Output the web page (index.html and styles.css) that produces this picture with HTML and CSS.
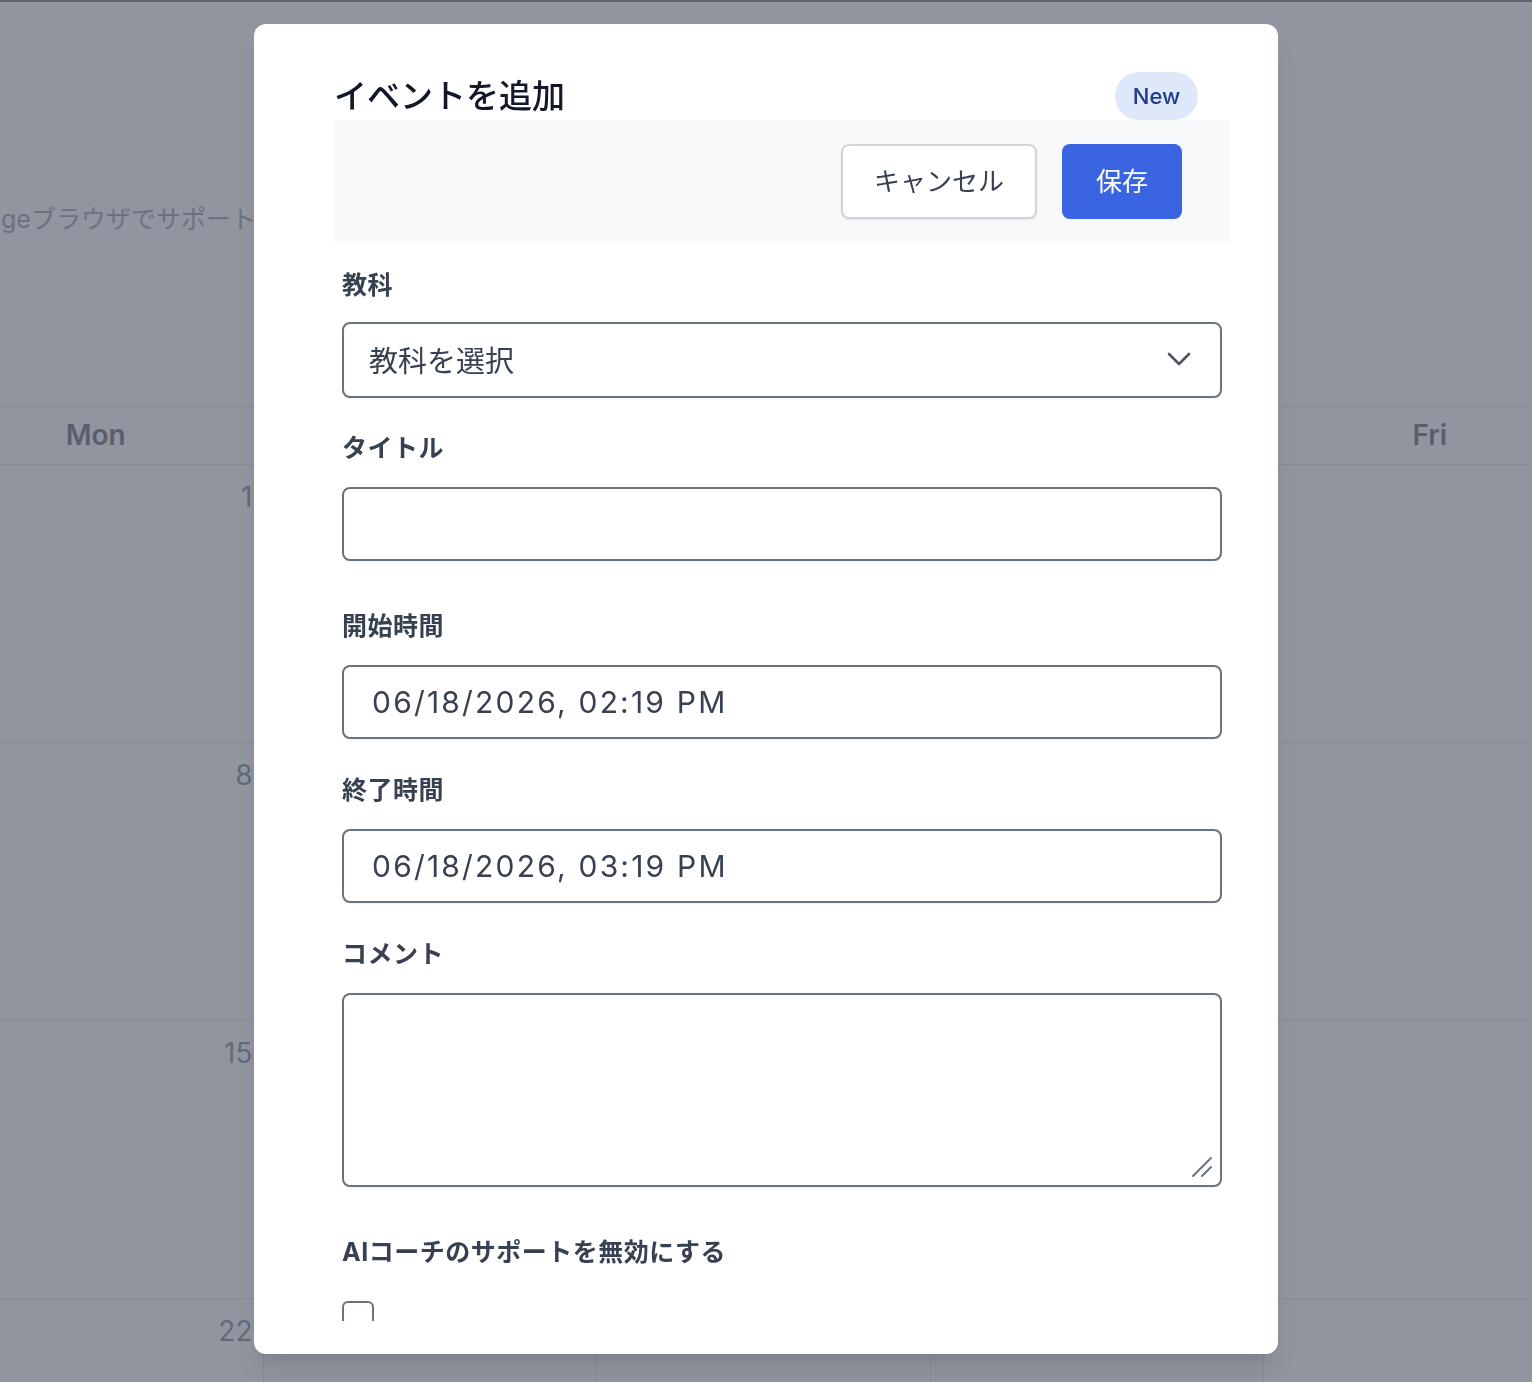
FILE: index.html
```html
<!DOCTYPE html>
<html lang="ja">
<head>
    <meta charset="UTF-8">
    <meta name="viewport" content="width=device-width, initial-scale=1.0">
    <title>カレンダー</title>
    <link rel="stylesheet" href="styles.css">
</head>
<body>

    <div class="page">
        <p class="notice">geブラウザでサポートされています</p>

        <div class="calendar">
            <div class="cal-head">
                <div>Mon</div>
                <div>Tue</div>
                <div>Wed</div>
                <div>Thu</div>
                <div>Fri</div>
            </div>
            <div class="cal-row">
                <div class="cell"><span>1</span></div>
                <div class="cell"><span>2</span></div>
                <div class="cell"><span>3</span></div>
                <div class="cell"><span>4</span></div>
                <div class="cell"><span>5</span></div>
            </div>
            <div class="cal-row">
                <div class="cell"><span>8</span></div>
                <div class="cell"><span>9</span></div>
                <div class="cell"><span>10</span></div>
                <div class="cell"><span>11</span></div>
                <div class="cell"><span>12</span></div>
            </div>
            <div class="cal-row">
                <div class="cell"><span>15</span></div>
                <div class="cell"><span>16</span></div>
                <div class="cell"><span>17</span></div>
                <div class="cell"><span>18</span></div>
                <div class="cell"><span>19</span></div>
            </div>
            <div class="cal-row">
                <div class="cell"><span>22</span></div>
                <div class="cell"><span>23</span></div>
                <div class="cell"><span>24</span></div>
                <div class="cell"><span>25</span></div>
                <div class="cell"><span>26</span></div>
            </div>
        </div>
    </div>

    <div class="overlay">
        <div class="modal">
            <div class="modal-inner">
                <div class="modal-head">
                    <h2>イベントを追加</h2>
                    <span class="badge">New</span>
                </div>

                <div class="actions">
                    <button type="button" class="btn btn-cancel">キャンセル</button>
                    <button type="submit" class="btn btn-save">保存</button>
                </div>

                <form class="event-form">
                    <div class="field field-select">
                        <label>教科</label>
                        <div class="select">
                            <span>教科を選択</span>
                            <svg width="26" height="16" viewBox="0 0 26 16" fill="none">
                                <path d="M3 3l10 10 10-10" stroke="#4b5563" stroke-width="2.6" stroke-linecap="round" stroke-linejoin="round"/>
                            </svg>
                        </div>
                    </div>

                    <div class="field field-wide">
                        <label>タイトル</label>
                        <input type="text" class="input">
                    </div>

                    <div class="field">
                        <label>開始時間</label>
                        <input type="text" class="input input-date" value="06/18/2026, 02:19 PM">
                    </div>

                    <div class="field">
                        <label>終了時間</label>
                        <input type="text" class="input input-date" value="06/18/2026, 03:19 PM">
                    </div>

                    <div class="field field-wide">
                        <label>コメント</label>
                        <div class="textarea-wrap">
                            <textarea class="input textarea"></textarea>
                            <svg class="resizer" width="22" height="22" viewBox="0 0 22 22" fill="none">
                                <path d="M2 20L20 2M11 20L20 11" stroke="#6b7280" stroke-width="2" stroke-linecap="round"/>
                            </svg>
                        </div>
                    </div>

                    <div class="field">
                        <label class="label-check">AIコーチのサポートを無効にする</label>
                        <input type="checkbox" class="check">
                    </div>
                </form>
            </div>
        </div>
    </div>

</body>
</html>
```

FILE: styles.css
```css
html, body {
    margin: 0;
    height: 100%;
    overflow: hidden;
}

body {
    font-family: Inter, "Noto Sans CJK JP", sans-serif;
    background: #fff;
    border-top: 2px solid #3a3b3d;
    box-sizing: border-box;
}

.page {
    margin-left: -71px;
}

.notice {
    margin: 201px 0 0 72px;
    font-size: 25px;
    line-height: 32px;
    color: #6b7280;
    white-space: nowrap;
}

.calendar {
    margin-top: 171px;
    width: 1668px;
}

.cal-head {
    display: grid;
    grid-template-columns: repeat(5, 333.5px);
    border-top: 1px solid #d1d5db;
    border-bottom: 1px solid #d1d5db;
}

.cal-head div {
    height: 57px;
    line-height: 57px;
    text-align: center;
    font-size: 28px;
    font-weight: 600;
    color: #1f2937;
}

.cal-row {
    display: grid;
    grid-template-columns: repeat(5, 333.5px);
    border-bottom: 1px solid #d1d5db;
}

.cell {
    height: 277px;
    padding: 16px 10px 0 0;
    box-sizing: border-box;
    text-align: right;
    border-left: 1px solid #d1d5db;
    font-size: 28px;
    line-height: 32px;
    color: #4b5563;
}

.cell:first-child {
    border-left: none;
}

/* modal */

.overlay {
    position: fixed;
    inset: 0;
    background: rgba(107, 114, 128, 0.75);
    display: flex;
    justify-content: center;
    align-items: flex-start;
    padding-top: 24px;
}

.modal {
    width: 1024px;
    height: 1330px;
    box-sizing: border-box;
    background: #fff;
    border-radius: 12px;
    padding: 48px 48px 33px 80px;
    box-shadow: 0 20px 25px -5px rgba(0, 0, 0, 0.1), 0 10px 10px -5px rgba(0, 0, 0, 0.04);
    display: flex;
    flex-direction: column;
}

.modal-inner {
    flex: 1;
    overflow: hidden;
}

.modal-head {
    display: flex;
    justify-content: space-between;
    align-items: center;
    height: 48px;
    padding-right: 32px;
}

.modal-head h2 {
    margin: 0;
    font-size: 33px;
    font-weight: 500;
    color: #111827;
    line-height: 48px;
}

.badge {
    display: inline-flex;
    align-items: center;
    justify-content: center;
    width: 83px;
    height: 48px;
    border-radius: 24px;
    background: #dfe8fb;
    color: #1e3a8a;
    font-size: 22px;
    font-weight: 500;
}

.actions {
    display: flex;
    justify-content: flex-end;
    gap: 25px;
    padding: 24px 48px 24px 0;
    background: #f8f9fb;
}

.btn {
    height: 75px;
    padding: 0 0 5px;
    border-radius: 8px;
    font-family: inherit;
    font-size: 26px;
    cursor: pointer;
}

.btn-cancel {
    width: 196px;
    background: #fff;
    color: #374151;
    border: 2px solid #d1d5db;
    box-shadow: 0 1px 2px rgba(0, 0, 0, 0.08);
}

.btn-save {
    width: 120px;
    background: #3a64e2;
    color: #fff;
    border: none;
}

.event-form {
    padding: 26px 8px 0;
}

.field {
    margin-bottom: 35px;
}

.field-select {
    margin-bottom: 34px;
}

.field-wide {
    margin-bottom: 49px;
}

.field label {
    display: block;
    font-size: 25px;
    line-height: 32px;
    font-weight: 700;
    letter-spacing: 0.5px;
    color: #374151;
    margin-bottom: 23px;
}

.field-select label {
    margin-bottom: 21px;
}

.field .label-check {
    margin-bottom: 33px;
}

.select,
.input {
    width: 100%;
    box-sizing: border-box;
    border: 2px solid #6b7280;
    border-radius: 8px;
    background: #fff;
    box-shadow: 0 1px 2px rgba(0, 0, 0, 0.06);
}

.select {
    height: 76px;
    display: flex;
    align-items: center;
    justify-content: space-between;
    padding: 0 28px 2px 25px;
    font-size: 29px;
    color: #374151;
}

.input {
    display: block;
    height: 74px;
    padding: 0 28px;
    font-family: inherit;
    font-size: 30px;
    color: #374151;
    outline: none;
}

.input-date {
    letter-spacing: 2.2px;
}

.textarea-wrap {
    position: relative;
}

.textarea {
    height: 194px;
    resize: none;
}

.resizer {
    position: absolute;
    right: 9px;
    bottom: 9px;
}

.check {
    appearance: none;
    -webkit-appearance: none;
    display: block;
    width: 32px;
    height: 32px;
    margin: 0;
    border: 2px solid #6b7280;
    border-radius: 6px;
    background: #fff;
}
```
